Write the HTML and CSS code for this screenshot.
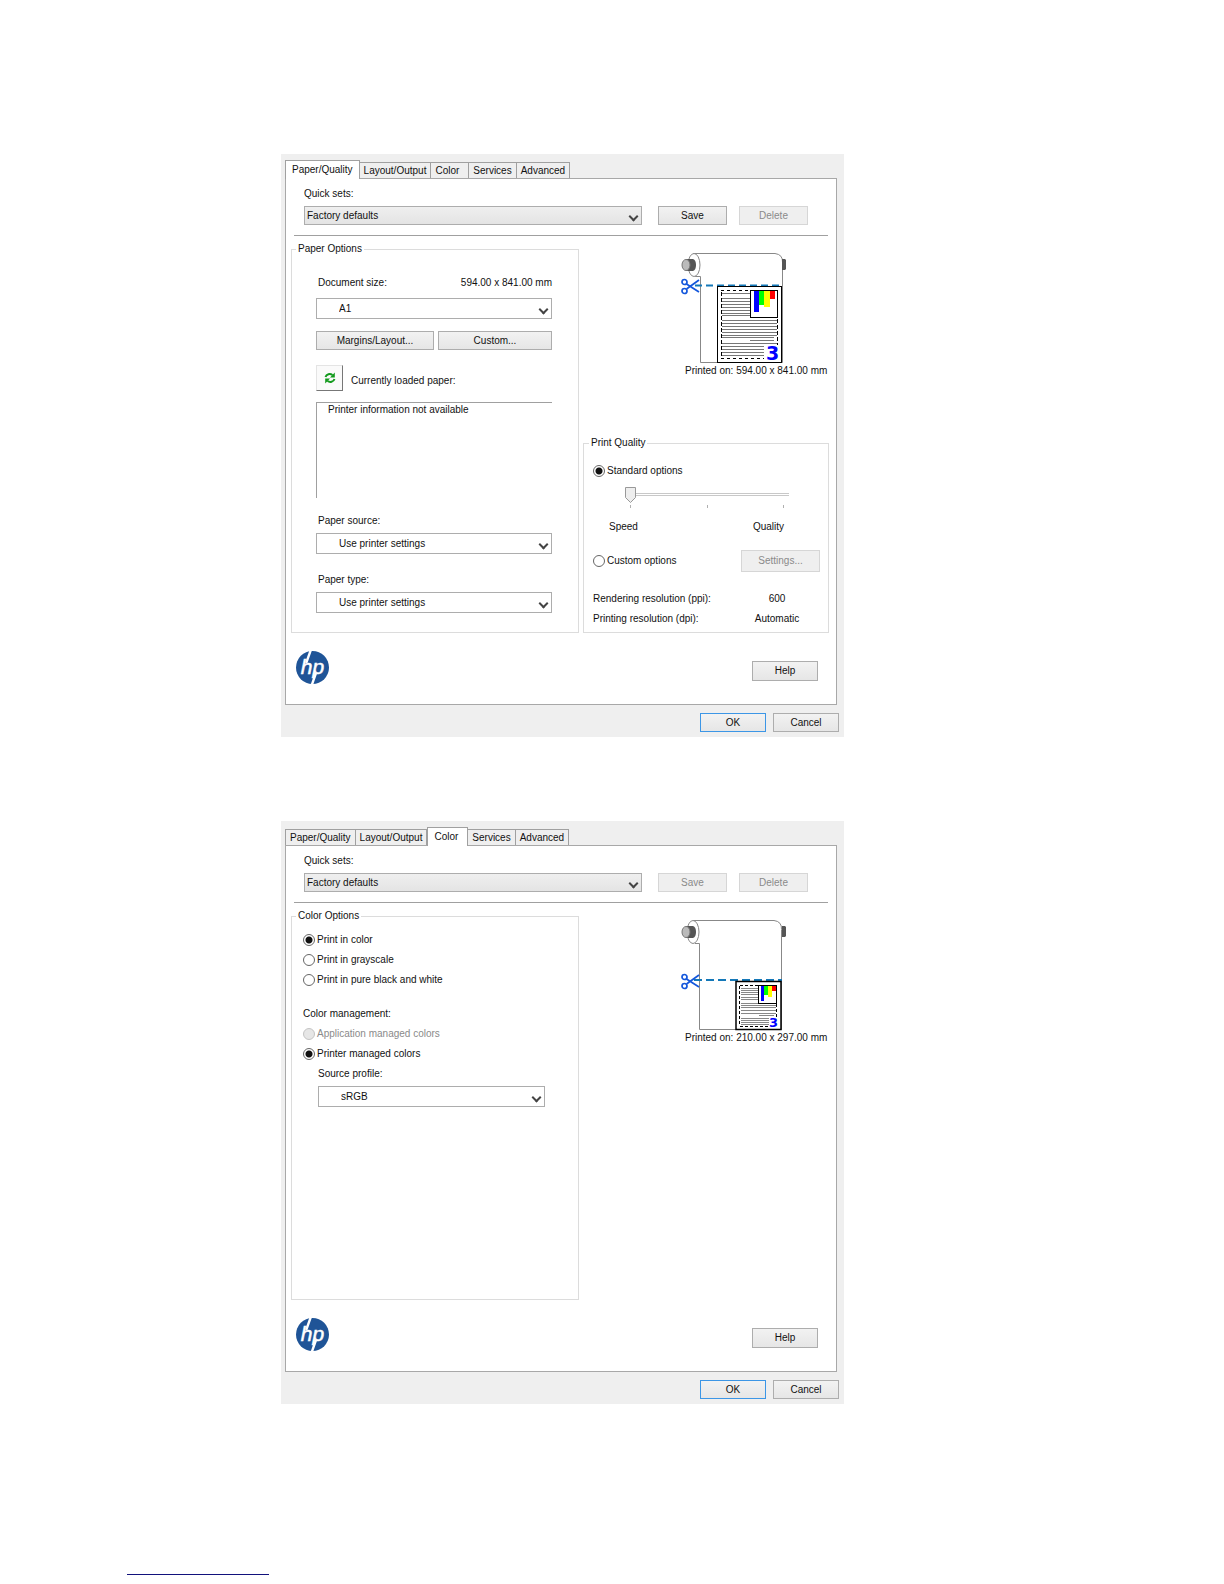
FILE: index.html
```html
<!DOCTYPE html>
<html lang="en">
<head>
  <meta charset="UTF-8">
  <meta name="viewport" content="width=device-width, initial-scale=1.0">
  <title>Printer preferences</title>
  <link rel="stylesheet" href="styles.css">
</head>
<body>
  <main class="page">

    <!-- Paper/Quality -->
    <form class="dialog">
      <div class="tabs" role="tablist">
        <button type="button" role="tab" class="tab active">Paper/Quality</button>
        <button type="button" role="tab" class="tab">Layout/Output</button>
        <button type="button" role="tab" class="tab tab-short">Color</button>
        <button type="button" role="tab" class="tab">Services</button>
        <button type="button" role="tab" class="tab">Advanced</button>
      </div>
      <div class="panel">
        <div class="quick">
          <label for="quick1">Quick sets:</label>
          <div class="quick-row">
            <div class="select gray"><select id="quick1"><option>Factory defaults</option></select></div>
            <button type="button" class="btn">Save</button>
            <button type="button" class="btn" disabled>Delete</button>
          </div>
        </div>
        <div class="columns">
          <fieldset class="group paper">
            <legend>Paper Options</legend>
            <div class="size-row">
              <label for="docsize">Document size:</label>
              <span>594.00 x 841.00 mm</span>
            </div>
            <div class="select"><select id="docsize"><option>A1</option></select></div>
            <div class="btn-row">
              <button type="button" class="btn">Margins/Layout...</button>
              <button type="button" class="btn">Custom...</button>
            </div>
            <div class="loaded-row">
              <button type="button" class="refresh" aria-label="Refresh">
                <svg width="12" height="12" viewBox="0 0 12 12" fill="none" stroke="#129a1c" stroke-width="2">
                  <path d="M1.5 5C2.5 2 6 1.200 8.500 3"/>
                  <path d="M10.500 7C9.500 10 6 10.800 3.500 9"/>
                  <path d="M10.800 .5V5.500H6z M1.200 11.500V6.500H6z" fill="#129a1c" stroke="none"/>
                </svg>
              </button>
              <span>Currently loaded paper:</span>
            </div>
            <div class="info-box">Printer information not available</div>
            <label for="source">Paper source:</label>
            <div class="select"><select id="source"><option>Use printer settings</option></select></div>
            <label for="type" class="next">Paper type:</label>
            <div class="select"><select id="type"><option>Use printer settings</option></select></div>
          </fieldset>

          <div class="side">
            <figure class="preview">
              <svg width="106" height="112" viewBox="0 0 106 112">
                <path d="M12 .5H94q8 1 7.500 9V109.500H19.500V23.500H14" fill="#fff" stroke="#888"/>
                <ellipse cx="13" cy="12" rx="6" ry="11.500" fill="#fff" stroke="#888"/>
                <path d="M5 6h7q3 1 3 6t-3 6H5z" fill="#555"/>
                <ellipse cx="5" cy="12" rx="4" ry="5.500" fill="#bbb" stroke="#777"/>
                <path d="M101 6h3l1 1v9l-1 1h-3z" fill="#555"/>
                <path d="M14 32.500H101" stroke="#1478b8" stroke-width="2" stroke-dasharray="7 4"/>
                <g fill="none" stroke="#1457dc" stroke-width="1.700">
                  <circle cx="3.500" cy="29" r="2.500"/>
                  <circle cx="3.500" cy="38" r="2.500"/>
                  <path d="M5.500 31L18 39M5.500 36L18 27"/>
                </g>
                <rect x="36.500" y="33.500" width="64" height="76" fill="#fff" stroke="#000"/>
                <path d="M40 37.500H69M40 105.500H83" stroke="#000" stroke-dasharray="3 3"/>
                <path d="M40.500 39V105M96.500 66V92" stroke="#000" stroke-dasharray="4 2"/>
                <path d="M41 40.500H69M41 45.500H69M41 48.500H69M41 51.500H69M41 54.500H69M41 57.500H69M41 60.500H69M41 62.500H69M41 67.500H96M41 70.500H96M41 73.500H96M41 76.500H96M41 79.500H96M41 82.500H96M41 84.500H93M69 87.500H93M41 90.500H96M41 93.500H83M41 96.500H83M41 99.500H83M41 102.500H83" stroke="#777"/>
                <rect x="69.500" y="37.500" width="27" height="27" fill="#fff" stroke="#000"/>
                <path d="M73 38h5v21h-5z" fill="#00f"/>
                <path d="M78 38h5v14h-5z" fill="#0f0"/>
                <path d="M83 38h6v16h-6z" fill="#ff0"/>
                <path d="M89 38h5v8h-5z" fill="#f00"/>
                <rect x="84" y="92" width="14" height="15" fill="#fff"/>
                <text x="85" y="107" class="page-no">3</text>
              </svg>
              <figcaption>Printed on: 594.00 x 841.00 mm</figcaption>
            </figure>

            <fieldset class="group quality">
              <legend>Print Quality</legend>
              <label class="radio"><input type="radio" name="quality" checked>Standard options</label>
              <div class="slider">
                <input type="range" min="0" max="2" value="0" aria-label="Print quality">
                <div class="ticks"><i></i><i></i><i></i></div>
              </div>
              <div class="slider-ends"><span>Speed</span><span>Quality</span></div>
              <div class="custom-row">
                <label class="radio"><input type="radio" name="quality">Custom options</label>
                <button type="button" class="btn" disabled>Settings...</button>
              </div>
              <dl class="resolution">
                <dt>Rendering resolution (ppi):</dt><dd>600</dd>
                <dt>Printing resolution (dpi):</dt><dd>Automatic</dd>
              </dl>
            </fieldset>
          </div>
        </div>
        <div class="panel-footer">
          <svg class="logo" viewBox="0 0 33 33" role="img" aria-label="hp">
            <circle cx="16.500" cy="16.500" r="16.500" fill="#1f5497"/>
            <path d="M10.200 12L14.800 -1M15.800 34L20 22" stroke="#fff" stroke-width="2.400"/>
            <text x="16.500" y="23" class="logo-text">hp</text>
          </svg>
          <button type="button" class="btn">Help</button>
        </div>
      </div>
      <div class="actions">
        <button type="button" class="btn default">OK</button>
        <button type="button" class="btn">Cancel</button>
      </div>
    </form>

    <!-- Color -->
    <form class="dialog">
      <div class="tabs" role="tablist">
        <button type="button" role="tab" class="tab">Paper/Quality</button>
        <button type="button" role="tab" class="tab">Layout/Output</button>
        <button type="button" role="tab" class="tab tab-short active">Color</button>
        <button type="button" role="tab" class="tab">Services</button>
        <button type="button" role="tab" class="tab">Advanced</button>
      </div>
      <div class="panel">
        <div class="quick">
          <label for="quick2">Quick sets:</label>
          <div class="quick-row">
            <div class="select gray"><select id="quick2"><option>Factory defaults</option></select></div>
            <button type="button" class="btn" disabled>Save</button>
            <button type="button" class="btn" disabled>Delete</button>
          </div>
        </div>
        <div class="columns">
          <fieldset class="group color">
            <legend>Color Options</legend>
            <label class="radio"><input type="radio" name="mode" checked>Print in color</label>
            <label class="radio"><input type="radio" name="mode">Print in grayscale</label>
            <label class="radio"><input type="radio" name="mode">Print in pure black and white</label>
            <p>Color management:</p>
            <label class="radio off"><input type="radio" name="manage" disabled>Application managed colors</label>
            <label class="radio"><input type="radio" name="manage" checked>Printer managed colors</label>
            <div class="profile">
              <label for="profile">Source profile:</label>
              <div class="select"><select id="profile"><option>sRGB</option></select></div>
            </div>
          </fieldset>

          <div class="side">
            <figure class="preview">
              <svg width="106" height="112" viewBox="0 0 106 112">
                <path d="M12 .5H93q8 1 7.500 9V109.500H18.500V23.500H14" fill="#fff" stroke="#888"/>
                <ellipse cx="12" cy="12" rx="6" ry="11.500" fill="#fff" stroke="#888"/>
                <path d="M5 6h7q3 1 3 6t-3 6H5z" fill="#555"/>
                <ellipse cx="5" cy="12" rx="4" ry="5.500" fill="#bbb" stroke="#777"/>
                <path d="M101 6h3l1 1v9l-1 1h-3z" fill="#555"/>
                <path d="M13 60H101" stroke="#1478b8" stroke-width="2" stroke-dasharray="8 4"/>
                <g fill="none" stroke="#1457dc" stroke-width="1.700">
                  <circle cx="3.500" cy="57" r="2.500"/>
                  <circle cx="3.500" cy="66" r="2.500"/>
                  <path d="M5.500 59L18 67M5.500 64L18 55"/>
                </g>
                <rect x="55" y="61.500" width="45" height="48" fill="#fff" stroke="#000" stroke-width="1.500"/>
                <path d="M59 65.500H77M59 106.500H88M58.500 66V106M95.500 84V97" stroke="#000" stroke-dasharray="3 2"/>
                <path d="M60 68.500H77M60 70.500H77M60 72.500H77M60 74.500H77M60 77.500H77M60 79.500H77M60 83.500H95M60 85.500H95M60 87.500H95M60 90.500H95M60 93.500H95M78 95.500H93M60 98.500H88M60 100.500H88M60 102.500H88M60 104.500H88" stroke="#888"/>
                <rect x="77.500" y="65.500" width="18" height="18" fill="#fff" stroke="#000"/>
                <path d="M80 66h3v15h-3z" fill="#00f"/>
                <path d="M83 66h4v9h-4z" fill="#0f0"/>
                <path d="M87 66h4v11h-4z" fill="#ff0"/>
                <path d="M91 66h4v5h-4z" fill="#f00"/>
                <rect x="88" y="97" width="10" height="10" fill="#fff"/>
                <text x="88" y="107" class="page-no small">3</text>
              </svg>
              <figcaption>Printed on: 210.00 x 297.00 mm</figcaption>
            </figure>
          </div>
        </div>
        <div class="panel-footer">
          <svg class="logo" viewBox="0 0 33 33" role="img" aria-label="hp">
            <circle cx="16.500" cy="16.500" r="16.500" fill="#1f5497"/>
            <path d="M10.200 12L14.800 -1M15.800 34L20 22" stroke="#fff" stroke-width="2.400"/>
            <text x="16.500" y="23" class="logo-text">hp</text>
          </svg>
          <button type="button" class="btn">Help</button>
        </div>
      </div>
      <div class="actions">
        <button type="button" class="btn default">OK</button>
        <button type="button" class="btn">Cancel</button>
      </div>
    </form>
  </main>
  <hr class="page-rule">
</body>
</html>
```
FILE: styles.css
```css
* { box-sizing: border-box; }
body { margin: 0; background: #fff; color: #111; font: 10px/16px "Liberation Sans", Arial, sans-serif; }
button, select, input { font: inherit; color: inherit; margin: 0; }
figure, dl, dd, p { margin: 0; }

.page { padding: 154px 24px 0 281px; display: flex; flex-direction: column; gap: 84px; }
.page-rule { width: 142px; margin: 170px 0 8px 127px; border: 0; border-top: 1px solid #12127c; }

.dialog { width: 100%; max-width: 563px; padding: 6px 5px 5px 4px; background: #efefef; }

/* tabs */
.tabs { display: flex; align-items: flex-end; height: 18px; }
.tab { height: 16px; padding: 0 4px; line-height: 14px; background: #efefef; border: 1px solid #a0a0a0; border-left-width: 0; border-bottom: 0; white-space: nowrap; }
.tab:first-child { border-left-width: 1px; }
.tab.active { position: relative; height: 19px; margin-bottom: -1px; padding: 0 6px; background: #fff; border-left-width: 1px; line-height: 16px; }
.tab.tab-short { padding-right: 9px; }

.panel { background: #fff; border: 1px solid #a8a8a8; width: calc(100% - 2px); }

/* quick sets */
.quick { margin: 0 8px; padding: 7px 0 10px 10px; border-bottom: 1px solid #a0a0a0; }
.quick label { display: block; margin-bottom: 4px; }
.quick-row { display: flex; gap: 12px; padding-right: 20px; }
.quick-row .select { flex: 1; margin-right: 4px; }
.quick-row .btn { width: 69px; }

/* controls */
.btn { height: 19px; padding: 0; line-height: 16px; text-align: center; background: linear-gradient(#f2f2f2, #e6e6e6); border: 1px solid #adadad; }
.btn:disabled { color: #8a8a8a; background: #efefef; border-color: #d6d6d6; }
.btn.default { border-color: #3c96e6; }
.select { position: relative; }
.select::after { content: ""; position: absolute; right: 5px; top: 50%; width: 5px; height: 5px; margin-top: -3px; border: solid #444; border-width: 0 2px 2px 0; transform: rotate(45deg); pointer-events: none; }
.select select { display: block; width: 100%; height: 21px; padding: 0 20px 0 22px; appearance: none; background: #fff; border: 1px solid #adadad; border-radius: 0; }
.select.gray select { height: 19px; padding-left: 2px; background: linear-gradient(#efefef, #e4e4e4); }
.radio { display: flex; align-items: center; gap: 2px; }
.radio input { appearance: none; width: 12px; height: 12px; border: 1px solid #666; border-radius: 50%; background: #fff; }
.radio input:checked { background: radial-gradient(circle, #111 3px, #fff 4px); }
.radio input:disabled { background: #e6e6e6; border-color: #c4c4c4; }
.radio.off { color: #8a8a8a; }

/* groups */
.columns { display: grid; grid-template-columns: 288px minmax(0, 1fr); gap: 4px; margin: 5px 7px 0 5px; min-height: 392px; }
.group { min-width: 0; margin: 0; padding: 0; border: 1px solid #dcdcdc; }
.group legend { padding: 0 2px; line-height: 16px; }
.paper { padding: 18px 26px 19px 24px; }
.paper legend { margin-left: -20px; }
.paper > label { display: block; margin: 0 0 4px 2px; }
.paper > label.next { margin-top: 18px; }
.size-row { display: flex; justify-content: space-between; margin: 0 0 7px 2px; }
.btn-row { display: grid; grid-template-columns: 118px 1fr; gap: 4px; margin: 12px 0 15px; }
.loaded-row { display: flex; align-items: center; gap: 8px; }
.loaded-row span { padding-top: 6px; }
.refresh { display: flex; align-items: center; justify-content: center; width: 27px; height: 26px; padding: 0; background: #fafafa; border: 1px solid #e4e4e4; border-right-color: #777; border-bottom-color: #777; }
.info-box { height: 96px; margin: 11px 0 15px; padding: 0 11px; line-height: 14px; border: solid #a0a0a0; border-width: 1px 0 0 1px; }

.side { display: flex; flex-direction: column; justify-content: space-between; }
.preview { padding: 12px 0 0 98px; }
.preview svg { display: block; }
.preview figcaption { margin: -2px 0 0 4px; white-space: nowrap; }
.page-no { font: bold 19px "DejaVu Sans", sans-serif; fill: #00f; }
.page-no.small { font-size: 13px; }

.quality { padding: 12px 8px 5px 9px; }
.quality legend { margin-left: -4px; }
.slider { margin: 8px 31px 0 32px; }
.slider input { display: block; width: 100%; height: 16px; appearance: none; background: linear-gradient(#c8c8c8, #c8c8c8) 0 6px / 100% 1px no-repeat, linear-gradient(#c8c8c8, #c8c8c8) 0 8px / 100% 1px no-repeat; }
.slider input::-webkit-slider-thumb { appearance: none; width: 11px; height: 16px; background: url("data:image/svg+xml,%3Csvg xmlns='http://www.w3.org/2000/svg' width='11' height='16'%3E%3Cpath d='M.5.5h10v10L5.500 15.500.5 10.500z' fill='%23eee' stroke='%23999'/%3E%3C/svg%3E"); }
.ticks { display: flex; justify-content: space-between; padding: 2px 5px 0; }
.ticks i { width: 1px; height: 3px; background: #b0b0b0; }
.slider-ends { display: flex; justify-content: space-between; margin: 11px 36px 0 16px; }
.custom-row { display: flex; justify-content: space-between; align-items: center; margin-top: 15px; }
.custom-row .btn { width: 79px; height: 22px; }
.resolution { display: grid; grid-template-columns: 1fr 86px; row-gap: 4px; margin-top: 19px; }
.resolution dd { text-align: center; }

.color { padding: 8px 33px 0 11px; }
.color legend { margin-left: -7px; }
.color .radio { margin-bottom: 4px; }
.color p { margin: 18px 0 4px; }
.profile { padding-left: 15px; }
.profile label { display: block; margin-bottom: 4px; }

.panel-footer { display: flex; justify-content: space-between; align-items: center; margin-top: 18px; padding: 0 18px 20px 10px; }
.panel-footer .btn { width: 66px; height: 20px; margin-top: 6px; }
.logo { width: 33px; height: 33px; }
.logo-text { font: italic 21px "Liberation Sans", sans-serif; fill: #fff; stroke: #fff; stroke-width: .5px; text-anchor: middle; }
.actions { display: flex; justify-content: flex-end; gap: 7px; padding-top: 8px; }
.actions .btn { width: 66px; }
```
